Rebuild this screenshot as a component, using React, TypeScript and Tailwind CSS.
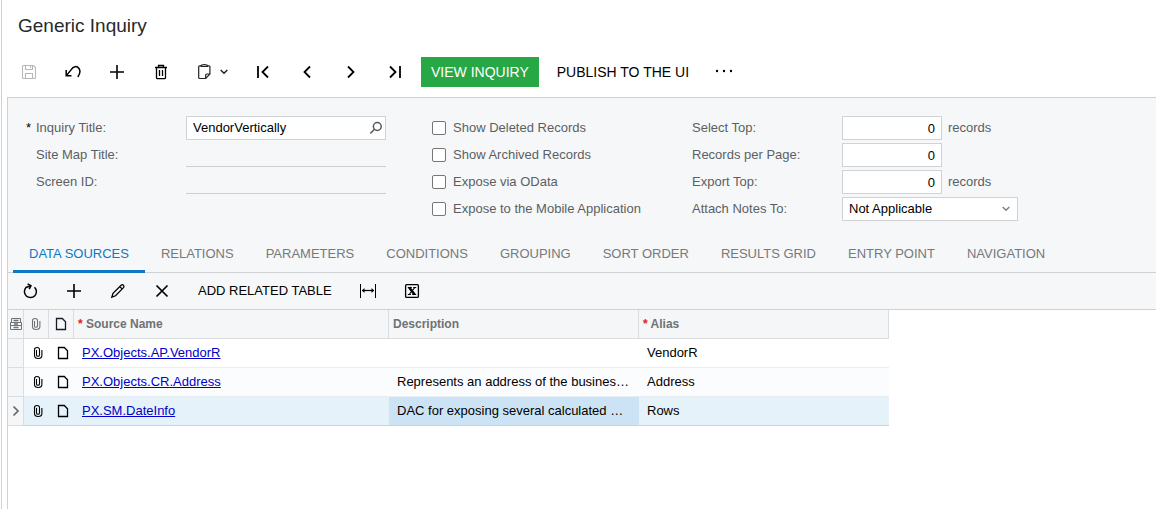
import { useState, type ReactNode } from 'react';
import clsx from 'clsx';

const tabs = [
  'Data Sources',
  'Relations',
  'Parameters',
  'Conditions',
  'Grouping',
  'Sort Order',
  'Results Grid',
  'Entry Point',
  'Navigation',
];

const sources = [
  { name: 'PX.Objects.AP.VendorR', description: '', alias: 'VendorR' },
  { name: 'PX.Objects.CR.Address', description: 'Represents an address of the busines…', alias: 'Address' },
  { name: 'PX.SM.DateInfo', description: 'DAC for exposing several calculated …', alias: 'Rows' },
];

const flags = [
  { id: 'deleted', label: 'Show Deleted Records' },
  { id: 'archived', label: 'Show Archived Records' },
  { id: 'odata', label: 'Expose via OData' },
  { id: 'mobile', label: 'Expose to the Mobile Application' },
];

const limits = [
  { id: 'select-top', label: 'Select Top:', unit: 'records' },
  { id: 'per-page', label: 'Records per Page:', unit: '' },
  { id: 'export-top', label: 'Export Top:', unit: 'records' },
];

function Icon({ children, size = 16, width = 1 }: { children: ReactNode; size?: number; width?: number }) {
  return (
    <svg
      width={size}
      height={size}
      viewBox={`0 0 ${size} ${size}`}
      fill="none"
      stroke="currentColor"
      strokeWidth={width}
      className="shrink-0"
      aria-hidden="true"
    >
      {children}
    </svg>
  );
}

const SaveIcon = () => (
  <Icon width={1.1}>
    <path d="M2.5 1.5h10l2 2v10a1 1 0 0 1-1 1h-11a1 1 0 0 1-1-1v-11a1 1 0 0 1 1-1z" />
    <path d="M4.5 1.5v4h7v-4M9.5 2v2M4.5 14.5v-5h7v5" />
  </Icon>
);

const UndoIcon = () => (
  <Icon width={1.5}>
    <path d="M1.2 6v5.800h5.300M1.600 11.400 6.200 5.600C8.200 2 12 1.700 14 4.500c1.600 2.500 1 5.500-1.200 8.500" />
  </Icon>
);

const PlusIcon = () => (
  <Icon width={1.6}>
    <path d="M8 1v14M1 8h14" />
  </Icon>
);

const TrashIcon = () => (
  <Icon width={1.3}>
    <path d="M2 3.500h12M5.500 3.500v-2h5v2M3.500 3.500v10.200q0 1 1 1h7q1 0 1-1V3.500M6.500 6v6M9.500 6v6" />
  </Icon>
);

const ClipboardIcon = () => (
  <Icon width={1.2}>
    <path d="M5 1.800H3.700a1 1 0 0 0-1 1v10.700a1 1 0 0 0 1 1h6l4.200-4.500V2.800a1 1 0 0 0-1-1h-1.300" />
    <path d="M5.200 2.500V1.800q0-1.200 3.100-1.200t3.100 1.200v.7zM9.700 14.500v-3.500q0-1 1-1h3.200" />
  </Icon>
);

const ChevronDownIcon = () => (
  <Icon size={8} width={1.5}>
    <path d="M.7 2 4 5.300 7.300 2" />
  </Icon>
);

const FirstIcon = () => (
  <Icon width={1.8}>
    <path d="M3 2v12M13 2.500 7.500 8l5.500 5.500" />
  </Icon>
);

const PrevIcon = () => (
  <Icon width={1.8}>
    <path d="M11 2.500 5.500 8l5.500 5.500" />
  </Icon>
);

const NextIcon = () => (
  <Icon width={1.8}>
    <path d="M5 2.500 10.500 8 5 13.500" />
  </Icon>
);

const LastIcon = () => (
  <Icon width={1.8}>
    <path d="M3 2.500 8.500 8 3 13.500M13 2v12" />
  </Icon>
);

const MoreIcon = () => (
  <Icon size={18}>
    <g fill="currentColor" stroke="none">
      <circle cx="2" cy="8" r="1.200" />
      <circle cx="9" cy="8" r="1.200" />
      <circle cx="16" cy="8" r="1.200" />
    </g>
  </Icon>
);

const SearchIcon = () => (
  <Icon size={14} width={1.5}>
    <circle cx="8.300" cy="5.500" r="3.900" />
    <path d="M5.500 8.300 1.300 12.500" />
  </Icon>
);

const RefreshIcon = () => (
  <Icon width={1.5}>
    <path d="M12.500 4.200A6 6 0 1 1 4 4.500L8.500 2.800" />
    <path d="M5.600.8 9 2.700 7.200 6.200" />
  </Icon>
);

const PencilIcon = () => (
  <Icon width={1.3}>
    <path d="M1.800 14.200l1.200-3.800L11.400 2q1-.8 2 .200t.300 2.200L5.500 12.800zM9.800 3.600l2.500 2.500" />
  </Icon>
);

const CloseIcon = () => (
  <Icon width={1.7}>
    <path d="M2.500 2.500l11 11M13.500 2.500l-11 11" />
  </Icon>
);

const FitIcon = () => (
  <Icon>
    <path d="M.5 1v14M15.500 1v14" />
    <path d="M2 7.500h12" strokeWidth="1.200" />
    <path d="M4.500 5 2 7.500 4.500 10zM11.500 5 14 7.500 11.500 10z" fill="currentColor" stroke="none" />
  </Icon>
);

const ExcelIcon = () => (
  <Icon width={1.3}>
    <rect x="1.600" y="1.600" width="12.800" height="12.800" rx="1" />
    <path d="M5.200 4.500l5.400 7" strokeWidth="2.500" />
    <path d="M10.800 4.500l-5.600 7M3.800 4.500h4M9.200 4.500h3M3.800 11.500h3M8.200 11.500h4" strokeWidth="1.200" />
  </Icon>
);

const ClipIcon = () => (
  <Icon size={14} width={1.1}>
    <path d="M5.500 4v5q0 1.300 1.500 1.300T8.500 9V3.700Q8.500 1.500 6 1.500T3.500 3.700v5.500q0 3.300 3.700 3.300t3.700-3.300V4" />
  </Icon>
);

const NoteIcon = () => (
  <Icon size={14} width={1.300}>
    <path d="M2.500 1.500h5.800l3.200 3.200v7.800h-9z" />
  </Icon>
);

// Stacked drawers used in the row details column
const FilesIcon = () => (
  <Icon size={12}>
    <path d="M1.500 4V.5h9V4M.5 4.500h11v3H.5zM.5 7.500h11v4H.5z" />
    <path d="M3.500 2.500h5M4 6h4M3.500 9.500h5" strokeWidth="1.300" />
  </Icon>
);

function ToolButton({ label, disabled, children }: { label: string; disabled?: boolean; children: ReactNode }) {
  return (
    <button
      type="button"
      aria-label={label}
      title={label}
      disabled={disabled}
      className="flex h-[30px] w-11 items-center justify-center text-black disabled:text-[#b8b8b8]"
    >
      {children}
    </button>
  );
}

const field = 'h-6 border border-[#d0d3d6] bg-white px-1.5 text-black outline-none';
const flatField = 'h-6 w-[200px] border-b border-[#cdd0d3] bg-transparent px-1.5 outline-none';

function InquiryForm() {
  const [title, setTitle] = useState('VendorVertically');

  return (
    <form className="flex items-start pt-[18px] pl-[18px] text-[#5c5f62]">
      <div className="flex w-[406px] flex-col gap-[3px]">
        <div className="flex items-center">
          <span className="w-2.5 text-black">*</span>
          <label htmlFor="title" className="w-[150px]">Inquiry Title:</label>
          <div className={clsx(field, 'flex w-[200px] items-center')}>
            <input
              id="title"
              className="min-w-0 flex-1 bg-transparent outline-none"
              value={title}
              onChange={(e) => setTitle(e.target.value)}
            />
            <button type="button" aria-label="Search" className="-mr-1 text-[#55585a]">
              <SearchIcon />
            </button>
          </div>
        </div>
        <div className="flex items-center pl-2.5">
          <label htmlFor="site-map" className="w-[150px]">Site Map Title:</label>
          <input id="site-map" className={flatField} readOnly />
        </div>
        <div className="flex items-center pl-2.5">
          <label htmlFor="screen-id" className="w-[150px]">Screen ID:</label>
          <input id="screen-id" className={flatField} readOnly />
        </div>
      </div>

      <div className="flex w-[260px] flex-col gap-[3px]">
        {flags.map((flag) => (
          <div key={flag.id} className="flex h-6 items-center gap-[7px]">
            <input
              id={flag.id}
              type="checkbox"
              className="h-3.5 w-3.5 appearance-none rounded-[2px] border border-[#767676] bg-white checked:bg-[#0278c7]"
            />
            <label htmlFor={flag.id}>{flag.label}</label>
          </div>
        ))}
      </div>

      <div className="flex flex-col gap-[3px]">
        {limits.map((limit) => (
          <div key={limit.id} className="flex items-center">
            <label htmlFor={limit.id} className="w-[150px]">{limit.label}</label>
            <input id={limit.id} className={clsx(field, 'w-[100px] text-right')} defaultValue="0" />
            {limit.unit && <span className="pl-1.5">{limit.unit}</span>}
          </div>
        ))}
        <div className="flex items-center">
          <label htmlFor="notes" className="w-[150px]">Attach Notes To:</label>
          <div className="relative">
            <select id="notes" className={clsx(field, 'w-[176px] appearance-none')}>
              <option>Not Applicable</option>
            </select>
            <span className="pointer-events-none absolute top-2 right-2 text-[#808080]">
              <ChevronDownIcon />
            </span>
          </div>
        </div>
      </div>
    </form>
  );
}

function SourcesTable() {
  const [selected, setSelected] = useState(2);
  const head = 'border-r border-b border-[#dadddf] p-0 text-left';

  return (
    <table className="w-[881px] table-fixed border-separate border-spacing-0">
      <colgroup>
        <col className="w-4" />
        <col className="w-[25px]" />
        <col className="w-[25px]" />
        <col className="w-[315px]" />
        <col className="w-[250px]" />
        <col className="w-[250px]" />
      </colgroup>
      <thead className="bg-[#f5f6f8] text-[12px] text-[#6f7274]">
        <tr className="h-[29px]">
          <th className={head} aria-label="Details"><span className="flex justify-center"><FilesIcon /></span></th>
          <th className={head} aria-label="Files"><span className="flex justify-center"><ClipIcon /></span></th>
          <th className={head} aria-label="Notes"><span className="flex justify-center text-[#201828]"><NoteIcon /></span></th>
          <th className={head}>
            <span className="pl-1 text-[#e02020]">*</span> Source Name
          </th>
          <th className={clsx(head, 'pl-1')}>Description</th>
          <th className={head}>
            <span className="pl-1 text-[#e02020]">*</span> Alias
          </th>
        </tr>
      </thead>
      <tbody className="text-black">
        {sources.map((source, i) => {
          const active = i === selected;
          const cell = clsx('border-b p-0', i === 2 ? 'border-[#cfd3d6]' : 'border-[#e6eef4]');
          return (
            <tr
              key={source.name}
              onClick={() => setSelected(i)}
              className={clsx('h-[29px]', active ? 'bg-[#e5f2fa]' : i === 1 && 'bg-[#fbfcfe]')}
            >
              <td className="border-r border-b border-[#dadddf] bg-[#f5f6f8] p-0 text-[#66696b]">
                {active && (
                  <span className="flex justify-center">
                    <Icon size={12} width={1.7}><path d="M3.500 1.500 8 6l-4.500 4.500" /></Icon>
                  </span>
                )}
              </td>
              <td className={cell}><span className="flex justify-center pl-0.5"><ClipIcon /></span></td>
              <td className={cell}><span className="flex justify-center pl-0.5"><NoteIcon /></span></td>
              <td className={clsx(cell, 'pl-2')}>
                <a href="#" className="text-[#0000c8] underline">{source.name}</a>
              </td>
              <td className={clsx(cell, 'truncate pl-2', active && 'bg-[#cbe3f5]')}>{source.description}</td>
              <td className={clsx(cell, 'pl-2')}>{source.alias}</td>
            </tr>
          );
        })}
      </tbody>
    </table>
  );
}

export default function App() {
  const [activeTab, setActiveTab] = useState(tabs[0]);

  return (
    <div className="flex min-h-screen pl-px font-['Liberation_Sans',Arial,sans-serif] text-[13px] leading-4">
      <div className="flex min-w-0 flex-1 flex-col border-l border-[#cfd2d4] bg-white pl-[5px]">
        <h1 className="pt-3 pl-[11px] text-[19px] leading-7 text-[#26292b]">Generic Inquiry</h1>

        <div className="flex items-center pt-[17px] pb-2.5">
          <ToolButton label="Save" disabled><SaveIcon /></ToolButton>
          <ToolButton label="Undo"><UndoIcon /></ToolButton>
          <ToolButton label="Add"><PlusIcon /></ToolButton>
          <ToolButton label="Delete"><TrashIcon /></ToolButton>
          <button type="button" aria-label="Clipboard" className="flex h-[30px] w-[58px] items-center justify-center gap-2 text-[#222]">
            <ClipboardIcon />
            <ChevronDownIcon />
          </button>
          <ToolButton label="First"><FirstIcon /></ToolButton>
          <ToolButton label="Previous"><PrevIcon /></ToolButton>
          <ToolButton label="Next"><NextIcon /></ToolButton>
          <ToolButton label="Last"><LastIcon /></ToolButton>
          <button type="button" className="ml-1 h-[30px] bg-[#28a745] px-2.5 text-[14px] text-white">
            VIEW INQUIRY
          </button>
          <button type="button" className="h-[30px] px-[18px] text-[14px] text-black">
            PUBLISH TO THE UI
          </button>
          <button type="button" aria-label="More" className="flex h-[30px] items-center px-2">
            <MoreIcon />
          </button>
        </div>

        <div className="flex-1 border-t border-l border-[#cdd2d3]">
          <div className="bg-[#f5f7f9]">
            <InquiryForm />

            <div role="tablist" className="mt-4 flex border-b border-[#cfd2d4] pl-[5px]">
              {tabs.map((tab) => (
                <button
                  key={tab}
                  type="button"
                  role="tab"
                  aria-selected={tab === activeTab}
                  onClick={() => setActiveTab(tab)}
                  className={clsx(
                    '-mb-px h-9 border-b-[3px] px-4 uppercase',
                    tab === activeTab ? 'border-[#0d78c3] text-[#0d78c3]' : 'border-transparent text-[#77797b]'
                  )}
                >
                  {tab}
                </button>
              ))}
            </div>

            <div className="flex items-center border-b border-[#cfd2d4] py-[3px]">
              <ToolButton label="Refresh"><RefreshIcon /></ToolButton>
              <ToolButton label="Add row"><PlusIcon /></ToolButton>
              <ToolButton label="Edit row"><PencilIcon /></ToolButton>
              <ToolButton label="Delete row"><CloseIcon /></ToolButton>
              <button type="button" className="h-[30px] px-3.5 text-black">ADD RELATED TABLE</button>
              <ToolButton label="Fit to screen"><FitIcon /></ToolButton>
              <ToolButton label="Export to Excel"><ExcelIcon /></ToolButton>
            </div>
          </div>

          <SourcesTable />
        </div>
      </div>
    </div>
  );
}
